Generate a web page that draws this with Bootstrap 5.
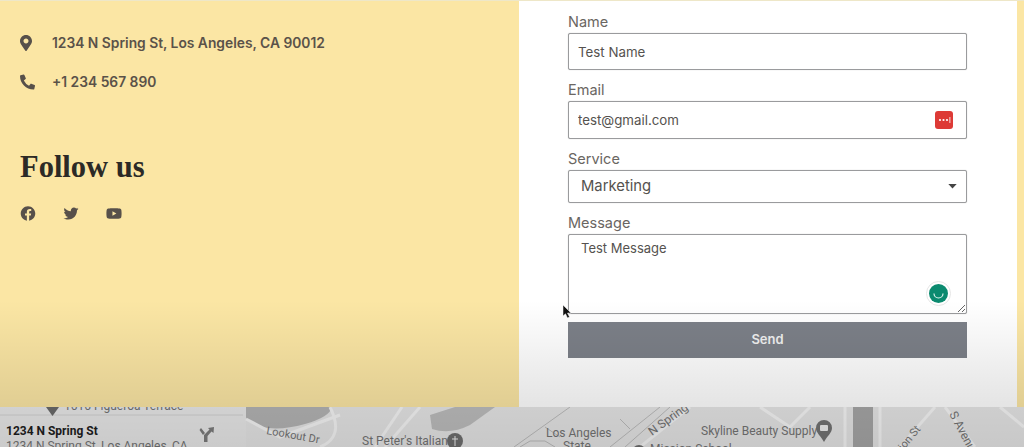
<!DOCTYPE html>
<html lang="en">
<head>
  <meta charset="UTF-8" />
  <meta name="viewport" content="width=device-width, initial-scale=1" />
  <title>Contact</title>
  <link href="https://cdn.jsdelivr.net/npm/bootstrap@5.3.0/dist/css/bootstrap.min.css" rel="stylesheet">
  <style>
    html, body { height: 447px; overflow: hidden; }
    body { background-color: #fbe6a4; font-family: Inter, "Noto Sans", sans-serif; color: #57504a; position: relative; }
    .top-part { height: 407px; border-top: 1px solid #eee7c8; }
    .info-side { width: 519px; padding: 31px 0 0 20px; }
    .form-side { width: 498px; background: #fff; padding: 9px 50px 0 49px; }
    .info-row { font-size: 13.8px; font-weight: 600; gap: 17px; height: 22px; color: #5a5249; }
    .info-row + .info-row { margin-top: 17px; }
    .info-row svg { width: 15px; height: 16px; fill: #57504a; }
    .follow-title { font-family: "Liberation Serif", serif; font-weight: 700; font-size: 30.5px; color: #2c2a26; line-height: 40px; margin: 54px 0 19px; }
    .social-links { gap: 27px; }
    .social-links svg { width: 16px; height: 15px; fill: #57504a; display: block; }
    .field-label { font-size: 14.5px; line-height: 23px; margin: 0; color: #6a6662; display: block; }
    .form-side .form-control, .form-side .form-select {
      border: 1px solid #9a9b9d; border-radius: 2px; color: #55524f; font-size: 13.3px; box-shadow: 0 0 1px #b5b5b5;
    }
    .form-side input.form-control { height: 37px; padding: 0 9px; }
    .form-side input.email-input { height: 38px; }
    .form-side .form-select { height: 33px; font-size: 14.8px; padding: 0 12px;
      background-image: url("data:image/svg+xml,%3csvg xmlns='http://www.w3.org/2000/svg' viewBox='0 0 10 6'%3e%3cpath d='M0 0h10L5 5.500z' fill='%23444'/%3e%3c/svg%3e");
      background-size: 9px 5px; background-position: right 9px center; }
    .form-side textarea.form-control { height: 80px; padding: 4px 12px; font-size: 13px; }
    .send-btn { height: 36px; background: #7c8088; border: 0; border-radius: 0; font-size: 13px; font-weight: 600; color: #f0f0f0; }
    .pw-badge { position: absolute; right: 14px; top: 10px; width: 18px; height: 18px; background: #dd3a36; border-radius: 3px; }
    .pw-badge svg { display: block; }
    .gram-badge { position: absolute; right: 16px; bottom: 8px; width: 25px; height: 25px; border-radius: 50%; background: #fff; border: 1px solid #e6e6e6; padding: 2px; }
    .gram-badge svg { display: block; }
    .mouse-ptr { position: absolute; left: 562px; top: 304px; width: 10px; height: 15px; }
    .map-strip { height: 40px; background: #e9e9e9; }
    .map-strip svg { display: block; }
    .map-strip text { font-family: Roboto, sans-serif; font-size: 12px; fill: #747474; }
    .shade { position: absolute; left: 0; right: 0; top: 300px; bottom: 0; pointer-events: none;
      background: linear-gradient(to bottom, rgba(0,0,0,0), rgba(0,0,0,.1) 70%, rgba(0,0,0,.13)); }
  </style>
</head>
<body>
  <div class="top-part d-flex">
    <div class="info-side">
      <div class="info-row d-flex align-items-center">
        <svg viewBox="0 0 384 512" preserveAspectRatio="xMinYMid"><path d="M172.268 501.67C26.97 291.031 0 262.429 0 192 0 85.961 85.961 0 192 0s192 85.961 192 192c0 70.429-26.97 99.031-172.268 309.67-9.535 13.774-29.93 13.773-39.464 0zM192 272c44.183 0 80-35.817 80-80s-35.817-80-80-80-80 35.817-80 80 35.817 80 80 80z"/></svg>
        <span>1234 N Spring St, Los Angeles, CA 90012</span>
      </div>
      <div class="info-row d-flex align-items-center">
        <svg viewBox="0 0 512 512"><path d="M497.39 361.8l-112-48a24 24 0 0 0-28 6.9l-49.6 60.6A370.66 370.66 0 0 1 130.6 204.11l60.6-49.6a23.94 23.94 0 0 0 6.9-28l-48-112A24.16 24.16 0 0 0 122.6.61l-104 24A24 24 0 0 0 0 48c0 256.5 207.9 464 464 464a24 24 0 0 0 23.4-18.6l24-104a24.29 24.29 0 0 0-14.01-27.6z"/></svg>
        <span>+1 234 567 890</span>
      </div>
      <h3 class="follow-title">Follow us</h3>
      <div class="social-links d-flex">
        <a href="#"><svg viewBox="0 0 512 512"><path d="M504 256C504 119 393 8 256 8S8 119 8 256c0 123.78 90.69 226.38 209.25 245V327.69h-63V256h63v-54.64c0-62.15 37-96.48 93.67-96.48 27.14 0 55.52 4.84 55.52 4.84v61h-31.28c-30.8 0-40.41 19.12-40.41 38.73V256h68.78l-11 71.69h-57.78V501C413.31 482.38 504 379.78 504 256z"/></svg></a>
        <a href="#"><svg viewBox="0 0 512 512"><path d="M459.37 151.716c.325 4.548.325 9.097.325 13.645 0 138.72-105.583 298.558-298.558 298.558-59.452 0-114.68-17.219-161.137-47.106 8.447.974 16.568 1.299 25.34 1.299 49.055 0 94.213-16.568 130.274-44.832-46.132-.975-84.792-31.188-98.112-72.772 6.498.974 12.995 1.624 19.818 1.624 9.421 0 18.843-1.3 27.614-3.573-48.081-9.747-84.143-51.98-84.143-102.985v-1.299c13.969 7.797 30.214 12.67 47.431 13.319-28.264-18.843-46.781-51.005-46.781-87.391 0-19.492 5.197-37.36 14.294-52.954 51.655 63.675 129.3 105.258 216.365 109.807-1.624-7.797-2.599-15.918-2.599-24.04 0-57.828 46.782-104.934 104.934-104.934 30.213 0 57.502 12.67 76.67 33.137 23.715-4.548 46.456-13.32 66.599-25.34-7.798 24.366-24.366 44.833-46.132 57.827 21.117-2.273 41.584-8.122 60.426-16.243-14.292 20.791-32.161 39.308-52.628 54.253z"/></svg></a>
        <a href="#"><svg viewBox="0 0 576 512"><path d="M549.655 124.083c-6.281-23.65-24.787-42.276-48.284-48.597C458.781 64 288 64 288 64S117.22 64 74.629 75.486c-23.497 6.322-42.003 24.947-48.284 48.597-11.412 42.867-11.412 132.305-11.412 132.305s0 89.438 11.412 132.305c6.281 23.65 24.787 41.5 48.284 47.821C117.22 448 288 448 288 448s170.78 0 213.371-11.486c23.497-6.321 42.003-24.171 48.284-47.821 11.412-42.867 11.412-132.305 11.412-132.305s0-89.438-11.412-132.305zm-317.51 213.508V175.185l142.739 81.205-142.739 81.201z"/></svg></a>
      </div>
    </div>
    <form class="form-side">
      <div class="mb-2">
        <label class="field-label" for="name">Name</label>
        <input class="form-control" id="name" type="text" value="Test Name">
      </div>
      <div class="mb-2">
        <label class="field-label" for="email">Email</label>
        <div class="position-relative">
          <input class="form-control email-input" id="email" type="text" value="test@gmail.com">
          <span class="pw-badge"><svg width="18" height="18" viewBox="0 0 18 18"><circle cx="5" cy="9" r="1.1" fill="#fff"/><circle cx="8.5" cy="9" r="1.1" fill="#fff"/><circle cx="12" cy="9" r="1.1" fill="#fff"/><rect x="14.5" y="6" width="0.8" height="6" fill="#fff"/></svg></span>
        </div>
      </div>
      <div class="mb-2">
        <label class="field-label" for="service">Service</label>
        <select class="form-select" id="service"><option>Marketing</option></select>
      </div>
      <div class="mb-2">
        <label class="field-label" for="message">Message</label>
        <div class="position-relative">
          <textarea class="form-control d-block" id="message">Test Message</textarea>
          <span class="gram-badge"><svg width="19" height="19" viewBox="0 0 19 19"><circle cx="9.500" cy="9.500" r="9.500" fill="#0b8a6f"/><path d="M5 9.500a4.500 4.500 0 0 0 9 0" fill="none" stroke="#dff3ee" stroke-width="1.200"/></svg></span>
        </div>
      </div>
      <button type="button" class="btn send-btn w-100">Send</button>
    </form>
  </div>
  <div class="map-strip overflow-hidden">
    <svg width="1024" height="40" viewBox="0 0 1024 40">
      <rect x="246" width="778" height="40" fill="#e6e6e6"/>
      <path d="M246 0H332Q330 10 305 17Q280 24 262 20L246 12Z" fill="#b4b4b4"/>
      <path d="M430 8L455 0H495L470 18Q450 28 432 22Z" fill="#bdbdbd"/>
      <g fill="none" stroke="#f6f6f6" stroke-width="3">
        <path d="M246 12L280 30L340 8"/>
        <path d="M330 0Q345 30 320 40"/>
        <path d="M375 40L402 0"/>
        <path d="M385 40L420 0"/>
        <path d="M640 40L690 0"/>
        <path d="M760 0L790 20L810 0"/>
        <path d="M845 0V40"/>
        <path d="M880 0V40"/>
        <path d="M900 40L935 0"/>
        <path d="M945 0L975 40"/>
        <path d="M1000 0L1024 20"/>
      </g>
      <g fill="none" stroke="#bcbcbc" stroke-width="1">
        <path d="M514 40L570 0"/>
        <path d="M610 40L660 0"/>
        <path d="M625 40L670 0"/>
        <path d="M545 20L560 30M620 12L630 22"/>
        <path d="M520 40L530 34H545L555 40"/>
      </g>
      <rect x="853" width="20" height="40" fill="#a6a6a6"/>
      <rect width="243" height="40" fill="#e9e9e9"/>
      <path d="M0 8H243" stroke="#d2d2d2"/>
      <path d="M46 0H59L52.500 9Z" fill="#6a6a6a"/>
      <text x="64" y="3">1616 Figueroa Terrace</text>
      <text x="6" y="28" style="font-weight:700;fill:#1d1d1d">1234 N Spring St</text>
      <text x="6" y="43">1234 N Spring St, Los Angeles, CA</text>
      <path d="M208 21L214 20L213.500 26L211.500 24.500L207.500 29V35H204V28L209.500 22.500ZM201 21L205 26L203 28L199.500 23Z" fill="#7c7c7c"/>
      <text x="266" y="27" transform="rotate(10 266 27)" style="font-size:11px">Lookout Dr</text>
      <text x="362" y="38">St Peter's Italian</text>
      <circle cx="455" cy="34" r="8" fill="#6e6e6e"/>
      <path d="M455 29V39M452 32H458" stroke="#eee"/>
      <text x="546" y="30">Los Angeles</text>
      <text x="563" y="43">State</text>
      <text x="652" y="29" transform="rotate(-36 652 29)">N Spring St</text>
      <text x="701" y="28">Skyline Beauty Supply</text>
      <path d="M824 13a8 8 0 0 1 8 8c0 5-5 8-8 14c-3-6-8-9-8-14a8 8 0 0 1 8-8z" fill="#737373"/>
      <rect x="820" y="18" width="8" height="6" rx="1" fill="#eee"/>
      <text x="888" y="62" transform="rotate(-50 888 62)" style="font-size:11px">Mission St</text>
      <text x="949" y="7" transform="rotate(62 949 7)">S Avenue</text>
      <circle cx="639" cy="45" r="7" fill="#6e6e6e"/>
      <text x="650" y="46">Mission School</text>
    </svg>
  </div>
  <svg class="mouse-ptr" viewBox="0 0 10 15"><path d="M1 1V12L3.500 9.800L5.500 14L7.500 13L5.500 9H9Z" fill="#111" stroke="#fff" stroke-width=".5"/></svg>
  <div class="shade"></div>
  <script src="https://cdn.jsdelivr.net/npm/bootstrap@5.3.0/dist/js/bootstrap.bundle.min.js" defer></script>
</body>
</html>
